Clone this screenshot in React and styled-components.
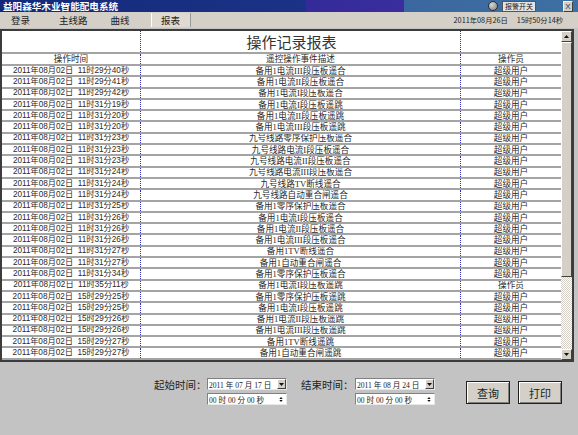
import React from 'react';
import styled, { createGlobalStyle } from 'styled-components';

const records = [
  ['11时29分40秒', '备用1电流III段压板遥合', '超级用户'],
  ['11时29分41秒', '备用1电流II段压板遥合', '超级用户'],
  ['11时29分42秒', '备用1电流I段压板遥合', '超级用户'],
  ['11时31分19秒', '备用1电流I段压板遥跳', '超级用户'],
  ['11时31分20秒', '备用1电流II段压板遥跳', '超级用户'],
  ['11时31分20秒', '备用1电流III段压板遥跳', '超级用户'],
  ['11时31分23秒', '九号线路零序保护压板遥合', '超级用户'],
  ['11时31分23秒', '九号线路电流I段压板遥合', '超级用户'],
  ['11时31分23秒', '九号线路电流II段压板遥合', '超级用户'],
  ['11时31分24秒', '九号线路电流III段压板遥合', '超级用户'],
  ['11时31分24秒', '九号线路TV断线遥合', '超级用户'],
  ['11时31分24秒', '九号线路自动重合闸遥合', '超级用户'],
  ['11时31分25秒', '备用1零序保护压板遥合', '超级用户'],
  ['11时31分26秒', '备用1电流I段压板遥合', '超级用户'],
  ['11时31分26秒', '备用1电流II段压板遥合', '超级用户'],
  ['11时31分26秒', '备用1电流III段压板遥合', '超级用户'],
  ['11时31分27秒', '备用1TV断线遥合', '超级用户'],
  ['11时31分27秒', '备用1自动重合闸遥合', '超级用户'],
  ['11时31分34秒', '备用1零序保护压板遥合', '超级用户'],
  ['11时35分11秒', '备用1电流I段压板遥跳', '操作员'],
  ['15时29分25秒', '备用1零序保护压板遥跳', '超级用户'],
  ['15时29分25秒', '备用1电流I段压板遥跳', '超级用户'],
  ['15时29分26秒', '备用1电流II段压板遥跳', '超级用户'],
  ['15时29分26秒', '备用1电流III段压板遥跳', '超级用户'],
  ['15时29分27秒', '备用1TV断线遥跳', '超级用户'],
  ['15时29分27秒', '备用1自动重合闸遥跳', '超级用户'],
];

const GlobalStyle = createGlobalStyle`
  html, body { margin: 0; padding: 0; }
  body {
    width: 578px;
    height: 435px;
    overflow: hidden;
    background: #c3c3c3;
    font-family: "Liberation Sans", "Noto Sans CJK SC", sans-serif;
    color: #1a1a1a;
  }
`;

const Window = styled.div`
  width: 578px;
  height: 435px;
  display: flex;
  flex-direction: column;
`;

const TitleBar = styled.div`
  height: 12px;
  display: flex;
  align-items: center;
  background: linear-gradient(to right,
    #14297a 0, #1b3286 306px,
    #352a9a 306px, #3a2e9e 404px,
    #3a679f 404px, #3e70a3 100%);
`;

const TitleText = styled.div`
  padding-left: 3px;
  color: #fff;
  font-family: "Noto Sans CJK SC", sans-serif;
  font-weight: 700;
  font-size: 9.6px;
  line-height: 12px;
  height: 12px;
`;

const Lamp = styled.div`
  margin-left: auto;
  width: 8px;
  height: 8px;
  border-radius: 50%;
  border: 1px solid #303030;
  background: radial-gradient(circle at 35% 35%, #d8d8d8, #7c7c7c);
`;

const AlarmButton = styled.div`
  margin-left: 4px;
  width: 32px;
  height: 9px;
  background: #e4e4e4;
  border: 1px solid #555;
  font-family: "Noto Sans CJK SC", sans-serif;
  font-size: 7px;
  line-height: 9px;
  text-align: center;
  color: #222;
`;

const CloseButton = styled.div`
  margin: 0 5px 0 27px;
  width: 8px;
  height: 9px;
  background: #d4d0c8;
  border: 1px solid #f0f0f0;
  border-right-color: #404040;
  border-bottom-color: #404040;
  font-size: 8px;
  line-height: 9px;
  text-align: center;
  color: #333;
`;

const MenuBar = styled.div`
  height: 16px;
  display: flex;
  align-items: center;
  background: #d4d0c8;
  font-family: "Noto Sans CJK SC", sans-serif;
  font-size: 9.5px;
  color: #222;
`;

const MenuItem = styled.div`
  margin-left: ${p => p.$ml}px;
  ${p => p.$active && `
    width: 40px;
    height: 14px;
    line-height: 14px;
    text-align: center;
    background: #dedad3;
    border-left: 1px solid #ffffff;
    border-right: 1px solid #9a9a9a;
    box-sizing: border-box;
  `}
`;

const Clock = styled.div`
  margin-left: ${p => p.$ml || 0}px;
  font-size: 7.3px;
  color: #222;
`;

const Frame = styled.div`
  margin: 1px 4px 0 0;
  height: 333px;
  box-sizing: border-box;
  border: 2px solid #3c3c3c;
  display: flex;
  background: #fff;
`;

const Grid = styled.div`
  flex: 1;
  display: flex;
  flex-direction: column;
`;

const Row = styled.div`
  height: ${p => p.$h}px;
  box-sizing: border-box;
  display: grid;
  grid-template-columns: 138px 320px 1fr;
  border-bottom: 2px solid #a4a4a4;
`;

const Cell = styled.div`
  display: flex;
  align-items: center;
  justify-content: center;
  white-space: pre;
  overflow: hidden;
  border-left: ${p => (p.$line ? '1px dotted #2a2ab8' : 'none')};
  font-family: ${p => (p.$time ? '"Liberation Sans"' : '"Liberation Serif"')}, "Noto Sans CJK SC", sans-serif;
  font-size: ${p => (p.$time ? 8.2 : 8.6)}px;
  line-height: 10px;
  color: #2a2a2a;
`;

const ReportTitle = styled(Cell)`
  font-family: "Noto Sans CJK SC", sans-serif;
  font-size: 15px;
  line-height: 20px;
  padding-right: 18px;
  color: #333;
`;

const ScrollBar = styled.div`
  width: 11px;
  display: flex;
  flex-direction: column;
  background: repeating-conic-gradient(#ffffff 0 25%, #d4d0c8 0 50%) 0 0 / 2px 2px;
`;

const ScrollButton = styled.div`
  height: 11px;
  box-sizing: border-box;
  display: flex;
  align-items: center;
  justify-content: center;
  background: #d4d0c8;
  border: 1px solid #fff;
  border-right-color: #404040;
  border-bottom-color: #404040;
`;

const Thumb = styled(ScrollButton)`
  height: 235px;
`;

const Track = styled.div`
  flex: 1;
`;

const Controls = styled.div`
  flex: 1;
  display: flex;
  align-items: flex-start;
  padding: 16px 0 0 154px;
`;

const Field = styled.div`
  display: flex;
  align-items: flex-start;
  margin-left: ${p => p.$ml || 0}px;
`;

const Label = styled.div`
  width: ${p => p.$w}px;
  font-family: "Noto Sans CJK SC", sans-serif;
  font-size: 10.5px;
  line-height: 13px;
  color: #222;
`;

const Pickers = styled.div`
  display: flex;
  flex-direction: column;
  gap: 3px;
`;

const Picker = styled.div`
  width: 80px;
  height: 12px;
  box-sizing: border-box;
  display: flex;
  align-items: center;
  background: #fff;
  border: 1px solid #808080;
  border-right-color: #e8e8e8;
  border-bottom-color: #e8e8e8;
  font-family: "Liberation Serif", "Noto Sans CJK SC", serif;
  font-size: 7.6px;
  color: #222;
  white-space: pre;
  padding-left: 1px;
`;

const DropButton = styled.div`
  margin-left: auto;
  width: 9px;
  height: 10px;
  box-sizing: border-box;
  display: flex;
  align-items: center;
  justify-content: center;
  background: #d4d0c8;
  border: 1px solid #fff;
  border-right-color: #404040;
  border-bottom-color: #404040;
`;

const Spin = styled.div`
  margin-left: auto;
  margin-right: 1px;
  width: 9px;
  display: flex;
  flex-direction: column;
  align-items: center;
  gap: 1px;
`;

const Buttons = styled.div`
  display: flex;
  gap: 8px;
  margin: 3px 0 0 31px;
`;

const PushButton = styled.div`
  width: 44px;
  height: 23px;
  box-sizing: border-box;
  display: flex;
  align-items: center;
  justify-content: center;
  background: #d4d0c8;
  border: 1px solid #202020;
  box-shadow: inset 1px 1px 0 #ffffff, inset -1px -1px 0 #808080;
  font-family: "Noto Sans CJK SC", sans-serif;
  font-size: 11px;
  color: #222;
`;

const Arrow = ({ up, w = 5, h = 3 }) => (
  <svg width={w} height={h} viewBox="0 0 5 3">
    <polygon points={up ? '0,3 5,3 2.5,0' : '0,0 5,0 2.5,3'} fill="#111" />
  </svg>
);

function DateField({ date }) {
  return (
    <Pickers>
      <Picker>
        {date}
        <DropButton><Arrow /></DropButton>
      </Picker>
      <Picker>
        {'00 时 00 分 00 秒'}
        <Spin>
          <Arrow up w={4} h={2} />
          <Arrow w={4} h={2} />
        </Spin>
      </Picker>
    </Pickers>
  );
}

export default function App() {
  return (
    <Window>
      <GlobalStyle />
      <TitleBar>
        <TitleText>益阳森华木业智能配电系统</TitleText>
        <Lamp />
        <AlarmButton>报警开关</AlarmButton>
        <CloseButton>X</CloseButton>
      </TitleBar>

      <MenuBar>
        <MenuItem $ml={11}>登录</MenuItem>
        <MenuItem $ml={29}>主线路</MenuItem>
        <MenuItem $ml={23}>曲线</MenuItem>
        <MenuItem $ml={21} $active>报表</MenuItem>
        <Clock $ml={263}>2011年08月26日</Clock>
        <Clock $ml={9}>15时50分14秒</Clock>
      </MenuBar>

      <Frame>
        <Grid>
          <Row $h={23}>
            <Cell />
            <ReportTitle $line>操作记录报表</ReportTitle>
            <Cell $line />
          </Row>
          <Row $h={12}>
            <Cell>操作时间</Cell>
            <Cell $line>遥控操作事件描述</Cell>
            <Cell $line>操作员</Cell>
          </Row>
          {records.map(([t, desc, user], i) => (
            <Row key={i} $h={11.3}>
              <Cell $time>{'2011年08月02日  ' + t}</Cell>
              <Cell $line>{desc}</Cell>
              <Cell $line>{user}</Cell>
            </Row>
          ))}
        </Grid>
        <ScrollBar>
          <ScrollButton><Arrow up /></ScrollButton>
          <Thumb />
          <Track />
          <ScrollButton><Arrow /></ScrollButton>
        </ScrollBar>
      </Frame>

      <Controls>
        <Field>
          <Label $w={53}>起始时间：</Label>
          <DateField date={'2011 年 07 月 17 日'} />
        </Field>
        <Field $ml={14}>
          <Label $w={54}>结束时间：</Label>
          <DateField date={'2011 年 08 月 24 日'} />
        </Field>
        <Buttons>
          <PushButton>查询</PushButton>
          <PushButton>打印</PushButton>
        </Buttons>
      </Controls>
    </Window>
  );
}
